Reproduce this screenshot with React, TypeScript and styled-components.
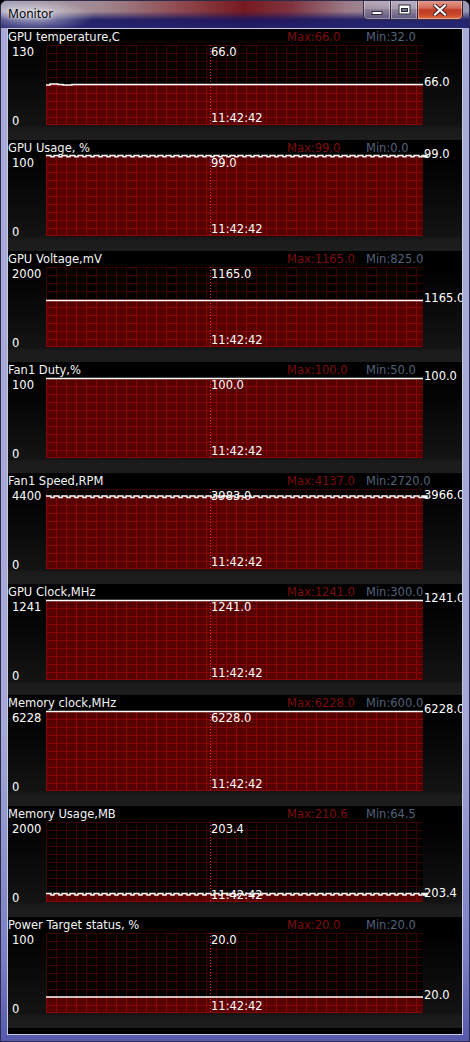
import React from 'react';
import styled, {createGlobalStyle} from 'styled-components';

type Step = [number, number];

type PanelData = {
  title: string;
  max: string;
  min: string;
  top: string;
  mid: string;
  right: string;
  steps: Step[];
};

const GRAPH_W = 377;
const GRAPH_H = 80;

const wave = (a: number, b: number): Step[] => {
  const s: Step[] = [];
  for (let x = 0; x < GRAPH_W; x += 8) {
    s.push([x, a]);
    s.push([x + 5, b]);
  }
  return s;
};

const panels: PanelData[] = [
  {
    title: 'GPU temperature,C',
    max: '66.0',
    min: '32.0',
    top: '130',
    mid: '66.0',
    right: '66.0',
    steps: [[0, 40], [4, 39], [12, 39.5], [17, 40], [26, 39.5]],
  },
  {title: 'GPU Usage, %', max: '99.0', min: '0.0', top: '100', mid: '99.0', right: '99.0', steps: wave(-0.5, 0.8)},
  {title: 'GPU Voltage,mV', max: '1165.0', min: '825.0', top: '2000', mid: '1165.0', right: '1165.0', steps: [[0, 33.5]]},
  {title: 'Fan1 Duty,%', max: '100.0', min: '50.0', top: '100', mid: '100.0', right: '100.0', steps: [[0, 0.5]]},
  {title: 'Fan1 Speed,RPM', max: '4137.0', min: '2720.0', top: '4400', mid: '3983.0', right: '3966.0', steps: wave(7, 8.5)},
  {title: 'GPU Clock,MHz', max: '1241.0', min: '300.0', top: '1241', mid: '1241.0', right: '1241.0', steps: [[0, 0.5]]},
  {title: 'Memory clock,MHz', max: '6228.0', min: '600.0', top: '6228', mid: '6228.0', right: '6228.0', steps: [[0, 0.5]]},
  {title: 'Memory Usage,MB', max: '210.6', min: '64.5', top: '2000', mid: '203.4', right: '203.4', steps: wave(71.5, 73)},
  {title: 'Power Target status, %', max: '20.0', min: '20.0', top: '100', mid: '20.0', right: '20.0', steps: [[0, 64]]},
];

const GlobalStyle = createGlobalStyle`
  html, body {
    margin: 0;
    padding: 0;
    background: #000;
  }
  body {
    font-family: "DejaVu Sans", Verdana, sans-serif;
  }
`;

const Window = styled.div`
  width: 470px;
  height: 1042px;
  display: flex;
  flex-direction: column;
  border-radius: 7px 7px 0 0;
  overflow: hidden;
  box-sizing: border-box;
  border: 1px solid #2a2c4a;
  background: linear-gradient(to bottom, #a9acd9 0%, #a4a8d6 70%, #7b7ec4 92%, #5658ac 100%);
`;

const TitleBar = styled.div`
  height: 27px;
  flex: none;
  display: flex;
  justify-content: space-between;
  align-items: flex-start;
  padding: 0 6px 0 7px;
  background:
    radial-gradient(ellipse 60px 16px at 34px 15px, rgba(255, 255, 255, 0.6), rgba(255, 255, 255, 0) 100%),
    linear-gradient(to bottom, rgba(22, 22, 96, 0) 0%, rgba(22, 22, 96, 0) 38%, rgba(22, 22, 100, 0.9) 70%, rgba(30, 30, 110, 0.92) 100%),
    linear-gradient(90deg, #a6a2b8 0%, #a0868e 22%, #8f4a50 38%, #761a1e 52%, #7e3440 62%, #9c7c88 74%, #a49aae 86%, #9a98b4 100%);
`;

const Title = styled.span`
  margin-top: 5px;
  font-family: "Noto Sans", "DejaVu Sans", sans-serif;
  font-size: 12px;
  line-height: 16px;
  color: #000;
  text-shadow: 0 0 6px rgba(255, 255, 255, 0.9), 0 0 2px rgba(255, 255, 255, 0.8);
`;

const Buttons = styled.div`
  display: flex;
  margin-top: -1px;
`;

const CaptionButton = styled.div<{$kind: 'min' | 'max' | 'close'}>`
  width: ${p => (p.$kind === 'close' ? 46 : 28)}px;
  height: 20px;
  box-sizing: border-box;
  display: flex;
  align-items: center;
  justify-content: center;
  border: 1px solid rgba(38, 30, 48, 0.85);
  border-top: none;
  margin-left: ${p => (p.$kind === 'min' ? 0 : -1)}px;
  border-radius: ${p => (p.$kind === 'min' ? '0 0 0 5px' : p.$kind === 'close' ? '0 0 5px 0' : '0')};
  box-shadow: inset 0 0 0 1px rgba(255, 255, 255, 0.35);
  background: ${p =>
    p.$kind === 'close'
      ? 'linear-gradient(to bottom, #e2a294 0%, #d46a58 42%, #c03a24 52%, #cc4a2e 80%, #e07048 100%)'
      : 'linear-gradient(to bottom, rgba(210,200,215,0.55) 0%, rgba(170,160,180,0.5) 45%, rgba(110,100,130,0.5) 52%, rgba(130,122,150,0.5) 100%)'};
`;

const Frame = styled.div`
  flex: 1;
  padding: 0 6px 6px 6px;
  display: flex;
  flex-direction: column;
`;

const Client = styled.div`
  flex: 1;
  border: 1px solid #c6c8dc;
  background: #000;
  overflow: hidden;
`;

const Panel = styled.section`
  height: 111px;
  background: linear-gradient(to bottom, #000 0px, #000 16px, #131313 96px, #1b1b1b 100px, #1d1d1d 111px);
`;

const Header = styled.header`
  height: 16px;
  display: flex;
  align-items: center;
  font-size: 11.5px;
  line-height: 16px;
  white-space: nowrap;
`;

const PanelTitle = styled.span`
  width: 279px;
  color: #f4f4f4;
`;

const MaxText = styled.span`
  width: 79px;
  color: #7e0c0c;
`;

const MinText = styled.span`
  color: #52627a;
`;

const Body = styled.div`
  height: ${GRAPH_H}px;
  display: grid;
  grid-template-columns: 38px ${GRAPH_W}px 1fr;
  font-size: 11.5px;
  line-height: 13px;
  color: #fff;
`;

const LeftAxis = styled.div`
  display: flex;
  flex-direction: column;
  justify-content: space-between;
  padding: 1px 0 0 4px;
  margin-bottom: -3px;
`;

const Graph = styled.div`
  position: relative;
`;

const GraphSvg = styled.svg`
  display: block;
  overflow: visible;
`;

const MidLabel = styled.span<{$bottom?: boolean}>`
  position: absolute;
  left: 165px;
  ${p => (p.$bottom ? 'bottom: 0px;' : 'top: 1px;')}
  white-space: nowrap;
`;

const RightAxis = styled.div`
  padding-left: 1px;
`;

const RightLabel = styled.div`
  white-space: nowrap;
`;

function linePath(steps: Step[], clamp: boolean) {
  const y = (v: number) => (clamp ? Math.max(0, v) : v);
  let d = `M0 ${y(steps[0][1])}`;
  for (let i = 1; i < steps.length; i++) {
    d += ` H${steps[i][0]} V${y(steps[i][1])}`;
  }
  return d + ` H${GRAPH_W}`;
}

function Chart({id, steps}: {id: number; steps: Step[]}) {
  const line = linePath(steps, false);
  const fill = linePath(steps, true) + ` V${GRAPH_H} H0 Z`;
  return (
    <GraphSvg width={GRAPH_W} height={GRAPH_H}>
      <defs>
        <pattern id={`grid${id}`} width="10" height="8" patternUnits="userSpaceOnUse">
          <path d="M0 0.5H10M0.5 0V8" stroke="#3c0000" fill="none" />
        </pattern>
        <pattern id={`gridf${id}`} width="10" height="8" patternUnits="userSpaceOnUse">
          <path d="M0 0.5H10M0.5 0V8" stroke="#8a0606" fill="none" />
        </pattern>
        <clipPath id={`clip${id}`}>
          <path d={fill} />
        </clipPath>
      </defs>
      <rect width={GRAPH_W} height={GRAPH_H} fill="#000" />
      <rect width={GRAPH_W} height={GRAPH_H} fill={`url(#grid${id})`} shapeRendering="crispEdges" />
      <path d={fill} fill="#560000" />
      <g clipPath={`url(#clip${id})`} shapeRendering="crispEdges">
        <rect width={GRAPH_W} height={GRAPH_H} fill={`url(#gridf${id})`} />
        <path d={`M0 79.5H${GRAPH_W - 1}`} stroke="#8a0606" />
      </g>
      <path d={`M164.5 0V${GRAPH_H}`} stroke="#ff2020" strokeDasharray="1 2" />
      <path d={line} stroke="#fff" strokeWidth="1.4" fill="none" />
    </GraphSvg>
  );
}

function MinimizeGlyph() {
  return (
    <svg width="12" height="12" viewBox="0 0 12 12">
      <rect x="1" y="7.5" width="10" height="3" fill="#fff" stroke="#2a2a3a" strokeWidth="1" />
    </svg>
  );
}

function MaximizeGlyph() {
  return (
    <svg width="13" height="11" viewBox="0 0 13 11">
      <rect x="1" y="1" width="11" height="9" fill="#fff" stroke="#2a2a3a" strokeWidth="1" />
      <rect x="3.5" y="4.5" width="6" height="3" fill="#6e6a80" stroke="#2a2a3a" strokeWidth="1" />
    </svg>
  );
}

function CloseGlyph() {
  return (
    <svg width="14" height="12" viewBox="0 0 14 12">
      <path d="M2 1.5L12 10.5M12 1.5L2 10.5" stroke="#3a1a1a" strokeWidth="4" strokeLinecap="square" />
      <path d="M2 1.5L12 10.5M12 1.5L2 10.5" stroke="#fff" strokeWidth="2.2" strokeLinecap="square" />
    </svg>
  );
}

function MonitorPanel({data, id}: {data: PanelData; id: number}) {
  const lastY = data.steps[data.steps.length - 1][1];
  return (
    <Panel>
      <Header>
        <PanelTitle>{data.title}</PanelTitle>
        <MaxText>Max:{data.max}</MaxText>
        <MinText>Min:{data.min}</MinText>
      </Header>
      <Body>
        <LeftAxis>
          <span>{data.top}</span>
          <span>0</span>
        </LeftAxis>
        <Graph>
          <Chart id={id} steps={data.steps} />
          <MidLabel>{data.mid}</MidLabel>
          <MidLabel $bottom>11:42:42</MidLabel>
        </Graph>
        <RightAxis>
          <RightLabel style={{marginTop: lastY - 8.5}}>{data.right}</RightLabel>
        </RightAxis>
      </Body>
    </Panel>
  );
}

export default function App() {
  return (
    <>
      <GlobalStyle />
      <Window>
        <TitleBar>
          <Title>Monitor</Title>
          <Buttons>
            <CaptionButton $kind="min">
              <MinimizeGlyph />
            </CaptionButton>
            <CaptionButton $kind="max">
              <MaximizeGlyph />
            </CaptionButton>
            <CaptionButton $kind="close">
              <CloseGlyph />
            </CaptionButton>
          </Buttons>
        </TitleBar>
        <Frame>
          <Client>
            {panels.map((p, i) => (
              <MonitorPanel key={p.title} data={p} id={i} />
            ))}
          </Client>
        </Frame>
      </Window>
    </>
  );
}
